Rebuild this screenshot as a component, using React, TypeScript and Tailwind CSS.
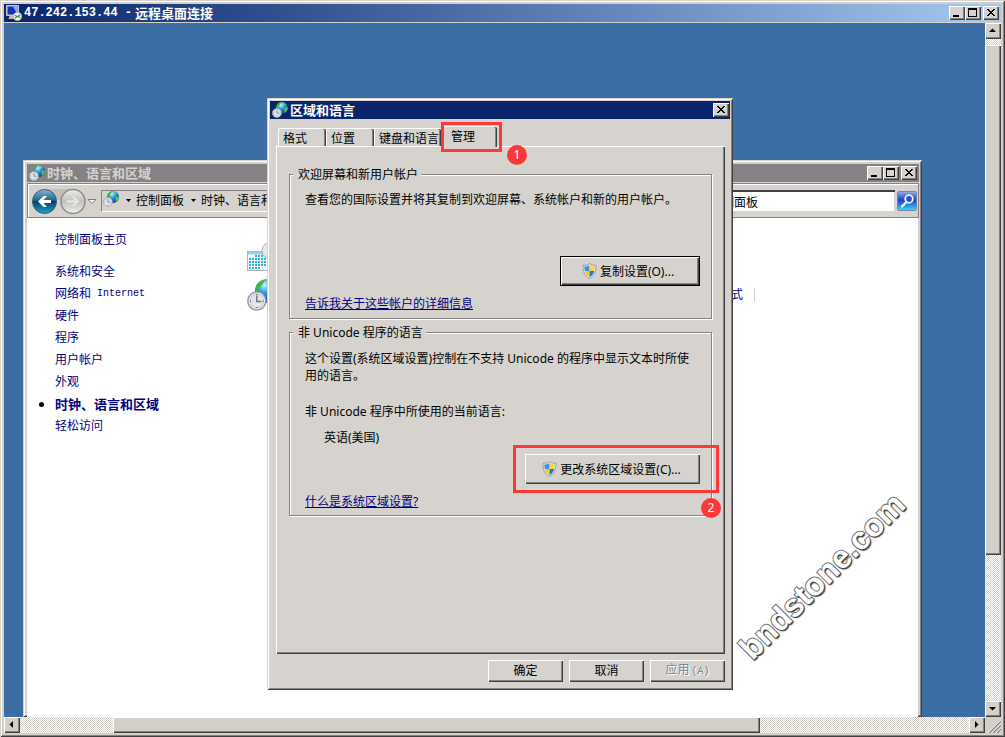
import type { ReactNode } from 'react';

const RAISED =
  'shadow-[inset_1px_1px_0_#fff,inset_-1px_-1px_0_#404040,inset_-2px_-2px_0_#848284]';
const FRAME =
  'shadow-[inset_1px_1px_0_#d6d3ce,inset_-1px_-1px_0_#404040,inset_2px_2px_0_#fff,inset_-2px_-2px_0_#848284]';

function GlobeClock({ className, id }: { className: string; id: string }) {
  return (
    <svg viewBox="0 0 32 32" className={className} aria-hidden="true">
      <defs>
        <radialGradient id={id} cx="40%" cy="25%" r="80%">
          <stop offset="0" stopColor="#c8f4ff" />
          <stop offset="0.4" stopColor="#2c9be0" />
          <stop offset="1" stopColor="#0a2f96" />
        </radialGradient>
      </defs>
      <circle cx="20" cy="12" r="12" fill={`url(#${id})`} />
      <path d="M8.500 9C10 4 14 1 19 .2c-1 2-3 2.600-3.400 4.600C14 7 13 8.500 11 9.500l-1 4.500-1.500-1z" fill="#3fba2c" />
      <path d="M25 13c2-2 4-2 6.500-1.500 0 4.500-2.600 8.500-6 10.400-1-3 .5-5-.5-8.900z" fill="#56c93a" />
      <path d="M23 2l4 2.500-2 2-3-2z" fill="#7fdc4c" />
      <circle cx="9.800" cy="22" r="9" fill="#eef1f4" stroke="#9a9fa6" strokeWidth="1.500" />
      <circle cx="9.800" cy="22" r="6.800" fill="#dfe5ea" stroke="#b3b9bf" strokeWidth=".8" />
      <path d="M9.800 16.500V22.500H14.500" fill="none" stroke="#6f7780" strokeWidth="1.500" />
      <path d="M9.800 15v1M9.800 28v1M3 22h1M15.800 22h1" stroke="#555" strokeWidth="1" />
    </svg>
  );
}

function CalendarIcon() {
  const dots: ReactNode[] = [];
  for (let r = 0; r < 5; r++) {
    for (let c = 0; c < 6; c++) {
      if ((r === 0 && c < 2) || (r === 4 && c > 3)) continue;
      dots.push(<rect key={`${r}-${c}`} x={2 + c * 3} y={12 + r * 3} width="2" height="2" fill="#35aed6" />);
    }
  }
  return (
    <svg viewBox="0 0 32 32" className="size-8" shapeRendering="auto" aria-hidden="true">
      <rect x=".5" y="8.500" width="25" height="19" fill="#f6fbfd" stroke="#aab4ba" />
      <rect x="1" y="9" width="24" height="2.500" fill="#8fd3ea" />
      {dots}
      <circle cx="23" cy="7.500" r="8" fill="#e6eaee" stroke="#a8adb3" />
    </svg>
  );
}

function RemoteIcon() {
  return (
    <svg viewBox="0 0 16 16" className="size-4 shrink-0" aria-hidden="true">
      <rect x="0" y="0" width="13" height="11" rx="1" fill="#c9c9c2" />
      <rect x="1.500" y="1.500" width="10" height="8" fill="#1631c4" />
      <path d="M7 1.500h4.500v8z" fill="#7db2ff" />
      <path d="M3.500 11h6l1 3H2.500z" fill="#bdbdb6" />
      <circle cx="11.500" cy="11.500" r="4.200" fill="#f1f1e6" stroke="#a6a698" strokeWidth=".7" />
      <path d="M9 10.200l2 1.400-2 1.600M14 9.800l-2 1.400 2 1.600" fill="none" stroke="#2c9a2c" strokeWidth="1.200" />
    </svg>
  );
}

function Shield() {
  return (
    <svg viewBox="0 0 16 16" className="size-4 shrink-0" aria-hidden="true">
      <path d="M7.500 .5C5.800 1.900 3.500 2.300 1 2.300c-.3 6.200 1.500 10.700 6.500 13.200 5-2.500 6.800-7 6.500-13.200C11.500 2.300 9.200 1.900 7.500 .5z" fill="#dfe3e6" stroke="#8e969c" strokeWidth=".9" />
      <path d="M7.400 2C6 3 4.200 3.500 2.400 3.600c0 1.600.1 3 .5 4.400h4.500z" fill="#3a92e4" />
      <path d="M7.600 2c1.400 1 3.200 1.500 5 1.600 0 1.600-.1 3-.5 4.400H7.600z" fill="#fbd42c" />
      <path d="M7.400 14C5.200 12.800 3.700 10.900 2.900 8h4.500z" fill="#f8c81c" />
      <path d="M7.600 14c2.200-1.200 3.700-3.100 4.500-6H7.600z" fill="#1c74d2" />
    </svg>
  );
}

function CaptionButton({ kind }: { kind: 'min' | 'max' | 'close' }) {
  const label = kind === 'min' ? '最小化' : kind === 'max' ? '最大化' : '关闭';
  return (
    <button type="button" aria-label={label} className={`flex h-[14px] w-4 items-center justify-center bg-[#d6d3ce] ${RAISED}`}>
      <svg viewBox="0 0 16 14" className="h-[14px] w-4" shapeRendering="crispEdges" aria-hidden="true">
        {kind === 'min' && <rect x="4" y="9" width="6" height="2" fill="#000" />}
        {kind === 'max' && <path d="M3 2h9v9H3zM4 4v6h7V4z" fillRule="evenodd" fill="#000" />}
        {kind === 'close' && (
          <path d="M4 3h2v1h1v1h2V4h1V3h2v1h-1v1h-1v1H9v1h1v1h1v1h1v1h-2V9H9V8H7v1H6v1H4V9h1V8h1V7h1V6H6V5H5V4H4z" fill="#000" />
        )}
      </svg>
    </button>
  );
}

function ScrollButton({ dir }: { dir: 'up' | 'down' | 'left' | 'right' }) {
  const paths = {
    up: 'M4 9h7L7.500 5.500z',
    down: 'M4 6h7L7.500 9.500z',
    left: 'M9 4v7L5.500 7.500z',
    right: 'M6 4v7l3.500-3.500z',
  };
  return (
    <button type="button" aria-label={`scroll ${dir}`} className={`size-4 shrink-0 bg-[#d4d0c8] ${RAISED}`}>
      <svg viewBox="0 0 16 16" className="size-4" aria-hidden="true">
        <path d={paths[dir]} fill="#000" />
      </svg>
    </button>
  );
}

const TRACK = 'bg-[repeating-conic-gradient(#d4d0c8_0_25%,#fff_0_50%)] bg-[length:2px_2px]';

const sidebar = ['硬件', '程序', '用户帐户', '外观'];

function ControlPanel() {
  return (
    <section className={`absolute top-[137px] bottom-0 left-[19px] flex w-[899px] flex-col bg-[#d6d3ce] pt-1 pr-[3px] pl-1 ${FRAME}`}>
      <header className="flex h-[18px] shrink-0 items-center bg-[#848284] pr-[2px] pl-[2px]">
        <GlobeClock className="size-4" id="g1" />
        <h2 className="ml-[2px] flex-1 text-[13px] leading-[18px] font-bold text-[#d6d3ce]">时钟、语言和区域</h2>
        <div className="flex">
          <CaptionButton kind="min" />
          <CaptionButton kind="max" />
        </div>
        <div className="ml-[2px] flex">
          <CaptionButton kind="close" />
        </div>
      </header>
      <div className="mt-px flex h-[35px] shrink-0 items-center border border-[#848284] pr-px pl-1 shadow-[inset_1px_1px_0_#fff]">
        <svg viewBox="0 0 66 30" className="h-[30px] w-[66px] shrink-0" aria-hidden="true">
          <defs>
            <linearGradient id="back" x1="0" y1="0" x2="0" y2="1">
              <stop offset="0" stopColor="#8fb6cf" />
              <stop offset=".45" stopColor="#1c6594" />
              <stop offset=".5" stopColor="#073f6b" />
              <stop offset="1" stopColor="#1ea3d8" />
            </linearGradient>
            <linearGradient id="fwd" x1="0" y1="0" x2="0" y2="1">
              <stop offset="0" stopColor="#ececea" />
              <stop offset=".5" stopColor="#c2c1be" />
              <stop offset="1" stopColor="#f0efed" />
            </linearGradient>
          </defs>
          <path d="M12 3h30v11H12z" fill="#c2bfbb" />
          <circle cx="12.500" cy="15.500" r="12" fill="url(#back)" stroke="#2d5c7c" />
          <path d="M19 14h-7.500l3.500-4h-3.500L6 15.500l5.500 5.500H15l-3.500-4H19z" fill="#fff" />
          <circle cx="41" cy="15.500" r="12" fill="url(#fwd)" stroke="#8e8d8b" strokeWidth="1.500" />
          <path d="M34.500 14H42l-3.500-4H42l5.500 5.500L42 21h-3.500l3.500-4h-7.500z" fill="#e6e4e1" stroke="#c6c4c0" strokeWidth=".5" />
          <path d="M56 13.500h8l-4 4z" fill="#f7f7f7" stroke="#737b8c" />
        </svg>
        <nav className="ml-[3px] flex h-[22px] flex-1 items-center border-t border-l border-b border-[#848284] border-b-white pl-px text-[12px]">
          <GlobeClock className="mb-1 size-4" id="g2" />
          <svg viewBox="0 0 7 4" className="ml-[6px] h-1 w-[7px]" aria-hidden="true"><path d="M1 0h5L3.500 3z" /></svg>
          <a href="#panel" className="ml-1">控制面板</a>
          <svg viewBox="0 0 7 4" className="ml-[6px] h-1 w-[7px]" aria-hidden="true"><path d="M1 0h5L3.500 3z" /></svg>
          <a href="#clock" className="ml-1">时钟、语言和区域</a>
        </nav>
        <input
          aria-label="搜索控制面板"
          defaultValue="搜索控制面板"
          className="ml-2 h-[22px] w-[214px] border-t-2 border-l-2 border-t-[#404040] border-l-[#404040] bg-white px-[3px] text-[12px] shadow-[inset_-1px_-1px_0_#d6d3ce] outline-none"
        />
        <button type="button" aria-label="搜索" className="ml-[2px] size-5 shrink-0 rounded-[2px] border border-[#7784a0]">
          <svg viewBox="0 0 18 18" className="size-[18px]" aria-hidden="true">
            <defs>
              <linearGradient id="find" x1="0" y1="0" x2="0" y2="1">
                <stop offset="0" stopColor="#8fa9e8" />
                <stop offset=".45" stopColor="#1b3ed0" />
                <stop offset="1" stopColor="#35d6f5" />
              </linearGradient>
            </defs>
            <rect width="18" height="18" fill="url(#find)" />
            <circle cx="11" cy="7" r="3.800" fill="#2553d8" stroke="#f2f4fa" strokeWidth="1.800" />
            <path d="M8.500 10L4 14.500" stroke="#f2f4fa" strokeWidth="2.200" strokeLinecap="round" />
          </svg>
        </button>
      </div>
      <div className="mr-px flex min-h-0 flex-1 overflow-hidden bg-white">
        <nav className="flex w-[220px] shrink-0 flex-col pt-[11px] pl-7 text-[12px] leading-[22px] text-[#000080]">
          <a href="#home" className="mb-[10px]">控制面板主页</a>
          <a href="#security">系统和安全</a>
          <a href="#network" className="flex h-[22px] items-center gap-[6px]">
            网络和 <span className="font-['Liberation_Mono'] text-[10px]">Internet</span>
          </a>
          {sidebar.map((s) => (
            <a key={s} href="#item">{s}</a>
          ))}
          <a href="#clock" className="-ml-4 flex h-[22px] items-center text-[13px] font-bold" aria-current="page">
            <span className="mr-[11px] size-[5px] rounded-full bg-black" />
            时钟、语言和区域
          </a>
          <a href="#ease">轻松访问</a>
        </nav>
        <main className="flex flex-1 flex-col gap-1 pt-[25px] text-[12px] text-[#000080]">
          <CalendarIcon />
          <div className="flex items-center">
            <GlobeClock className="size-8 shrink-0" id="g3" />
            <a href="#format" className="w-[476px] border-r border-[#d0d0d0] pr-[11px] text-right leading-[14px]">
              更改日期、时间或数字格式
            </a>
          </div>
        </main>
      </div>
    </section>
  );
}

const TAB = "relative h-[18px] rounded-t-[2px] border-t border-l border-white pt-px pl-1 text-left text-[12px] leading-[18px] shadow-[inset_-1px_0_0_#404040,inset_-2px_0_0_#848284]";
const PUSH = `h-[22px] w-[75px] text-[12px] leading-[20px] ${RAISED}`;
const FIELDSET =
  'flex flex-col border border-[#848284] pl-[3px] shadow-[1px_1px_0_#fff,inset_1px_1px_0_#fff]';
const LEGEND = 'bg-[#d6d3ce] pt-[2px] pr-[3px] pl-[5px] leading-[16px]';
const BADGE =
  "absolute flex size-5 items-center justify-center rounded-full bg-[#fd3838] font-['Noto_Sans'] text-[12px] leading-[20px] text-white";

function RegionDialog() {
  return (
    <section role="dialog" aria-labelledby="dlg" className={`absolute top-[75px] left-[263px] flex h-[592px] w-[466px] flex-col bg-[#d6d3ce] p-[3px] ${FRAME}`}>
      <header className="flex h-[18px] shrink-0 items-center bg-[#08246b] pr-px pl-[2px]">
        <GlobeClock className="size-4" id="g4" />
        <h2 id="dlg" className="ml-[2px] flex-1 text-[13px] leading-[18px] font-bold text-white">区域和语言</h2>
        <CaptionButton kind="close" />
      </header>
      <div className="flex flex-1 flex-col pt-[7px] pr-[5px] pb-[5px] pl-[6px]">
        <div role="tablist" className="flex h-5 items-end pl-[2px]">
          <button type="button" role="tab" className={`${TAB} w-12`}>格式</button>
          <button type="button" role="tab" className={`${TAB} w-12`}>位置</button>
          <button type="button" role="tab" className={`${TAB} w-[67px]`}>键盘和语言</button>
          <button type="button" role="tab" aria-selected="true" className="relative z-10 -mb-px h-[21px] w-[56px] rounded-t-[2px] border-t border-l border-white bg-[#d6d3ce] pb-px pl-[9px] text-left text-[12px] leading-[18px] shadow-[inset_-1px_0_0_#404040,inset_-2px_0_0_#848284]">
            管理
          </button>
        </div>
        <div className={`flex flex-1 flex-col gap-1 px-[13px] pt-[19px] text-[12px] leading-[17px] ${RAISED}`}>
          <fieldset className={`${FIELDSET} pb-[5px]`}>
            <legend className={LEGEND}>欢迎屏幕和新用户帐户</legend>
            <div className="flex flex-col pr-[11px] pl-[12px]">
              <p className="mt-2 leading-[18px]">查看您的国际设置并将其复制到欢迎屏幕、系统帐户和新的用户帐户。</p>
              <button type="button" className="mt-[47px] flex h-[30px] w-[140px] items-center justify-center gap-[2px] self-end border border-black pr-1 shadow-[inset_1px_1px_0_#fff,inset_-1px_-1px_0_#404040,inset_-2px_-2px_0_#848284]">
                <Shield />
                <span>复制设置(O)...</span>
              </button>
              <a href="#details" className="mt-[9px] self-start leading-[18px] text-[#000080] underline">告诉我关于这些帐户的详细信息</a>
            </div>
          </fieldset>
          <fieldset className={`${FIELDSET} pb-[4px]`}>
            <legend className={LEGEND}>非 Unicode 程序的语言</legend>
            <div className="flex flex-col pr-[11px] pl-[12px]">
              <p className="mt-[9px]">
                这个设置(系统区域设置)控制在不支持 Unicode 的程序中显示文本时所使
                <br />
                用的语言。
              </p>
              <p className="mt-[19px]">非 Unicode 程序中所使用的当前语言:</p>
              <p className="mt-[9px] pl-[19px]">英语(美国)</p>
              <button type="button" className={`mt-2 flex h-[30px] w-[175px] items-center justify-center gap-[2px] self-end pr-[2px] ${RAISED}`}>
                <Shield />
                <span>更改系统区域设置(C)...</span>
              </button>
              <a href="#locale" className="mt-[9px] self-start leading-[18px] text-[#000080] underline">什么是系统区域设置?</a>
            </div>
          </fieldset>
        </div>
        <div className="mt-[6px] flex justify-end gap-[6px]">
          <button type="button" className={PUSH}>确定</button>
          <button type="button" className={PUSH}>取消</button>
          <button type="button" disabled className={`${PUSH} text-[#848284] text-shadow-[1px_1px_0_#fff]`}>
            应用<span className="ml-[2px] font-['Liberation_Mono'] text-[10px]">(A)</span>
          </button>
        </div>
      </div>
      <div className="pointer-events-none absolute top-[24px] left-[174px] z-20 h-[30px] w-[61px] border-3 border-[#fd3838]" />
      <span className={`${BADGE} top-[47px] left-[240px]`}>1</span>
      <div className="pointer-events-none absolute top-[347px] left-[246px] z-20 h-[48px] w-[206px] border-3 border-[#fd3838]" />
      <span className={`${BADGE} top-[400px] left-[434px]`}>2</span>
    </section>
  );
}

export default function App() {
  return (
    <div className={`flex h-screen w-full flex-col overflow-hidden bg-[#d4d0c8] p-1 font-['Noto_Sans','Noto_Sans_CJK_SC',sans-serif] text-[12px] text-black ${FRAME}`}>
      <header className="flex h-[18px] shrink-0 items-center bg-linear-to-r from-[#0a246a] to-[#a6caf0] pr-[2px] pl-[2px] text-white">
        <RemoteIcon />
        <h1 className="ml-[2px] flex flex-1 items-center gap-[3px] leading-[18px] font-bold">
          <span className="font-['Liberation_Mono'] text-[12px]">47.242.153.44 -</span>
          <span className="text-[13px]">远程桌面连接</span>
        </h1>
        <div className="flex">
          <CaptionButton kind="min" />
          <CaptionButton kind="max" />
        </div>
        <div className="ml-[2px] flex">
          <CaptionButton kind="close" />
        </div>
      </header>
      <div className="mt-px flex min-h-0 flex-1">
        <div className="relative min-w-0 flex-1 overflow-hidden bg-[#3a6ea5]">
          <ControlPanel />
          <RegionDialog />
          <div className="pointer-events-none absolute top-[537px] left-[708px] w-[220px] -rotate-45 text-center font-['Liberation_Sans'] text-[32px] leading-8 font-bold text-white [paint-order:stroke_fill] [-webkit-text-stroke:2px_#707070] text-shadow-[0_2px_1px_#404040]">
            bndstone.com
          </div>
        </div>
        <div className={`flex w-4 shrink-0 flex-col ${TRACK}`}>
          <ScrollButton dir="up" />
          <div className="flex-[6]" />
          <div className={`flex-[510] bg-[#d4d0c8] ${RAISED}`} />
          <div className="flex-[146]" />
          <ScrollButton dir="down" />
        </div>
      </div>
      <div className="flex h-4 shrink-0">
        <div className={`flex flex-1 ${TRACK}`}>
          <ScrollButton dir="left" />
          <div className="flex-[93]" />
          <div className={`flex-[647] bg-[#d4d0c8] ${RAISED}`} />
          <div className="flex-[209]" />
          <ScrollButton dir="right" />
        </div>
        <svg viewBox="0 0 16 16" className="size-4" aria-hidden="true">
          <path d="M4 16L16 4M8 16l8-8M12 16l4-4" stroke="#808080" strokeWidth="1.500" />
          <path d="M3 16L16 3M7 16l9-9M11 16l5-5" stroke="#fff" strokeWidth=".7" />
        </svg>
      </div>
    </div>
  );
}
